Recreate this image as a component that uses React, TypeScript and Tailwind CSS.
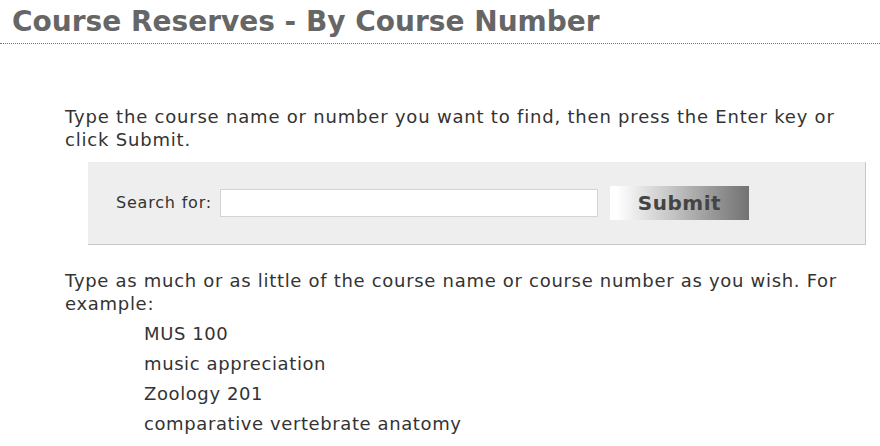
import React from 'react'

const examples = ['MUS 100', 'music appreciation', 'Zoology 201', 'comparative vertebrate anatomy']

const App: React.FC = () => {
  return (
    <div className="min-h-screen bg-white text-[#333] font-['DejaVu_Sans',Verdana,sans-serif]">
      <h1 className="border-b border-dotted border-[#777] pl-3 pt-[3px] pb-[2px] text-[28px] font-bold leading-[38px] text-[#666]">
        Course Reserves - By Course Number
      </h1>

      <div className="pl-[65px] pr-[20px] pt-[61px]">
        <p className="text-[18px] leading-[23px] tracking-[0.8px]">
          Type the course name or number you want to find, then press the Enter key or click Submit.
        </p>

        <form
          className="ml-[23px] mt-[11px] flex h-[83px] w-[778px] items-center border-r border-b border-[#c8c8c8] bg-[#eeeeee] pl-[28px]"
          onSubmit={(e) => e.preventDefault()}
        >
          <label htmlFor="q" className="text-[16px] tracking-[0.8px] text-[#333]">
            Search for:
          </label>
          <input
            id="q"
            type="text"
            className="ml-[8px] h-[28px] w-[378px] border border-[#d4d4d4] bg-white px-1 outline-none"
          />
          <button
            type="submit"
            className="ml-[12px] h-[34px] w-[139px] bg-gradient-to-r from-white from-[5%] via-[#c4c4c4] via-[45%] to-[#727272] text-[20px] font-bold tracking-[0.5px] text-[#444]"
          >
            Submit
          </button>
        </form>

        <p className="mt-[24px] text-[18px] leading-[23px] tracking-[0.7px]">
          Type as much or as little of the course name or course number as you wish. For example:
        </p>
        <ul className="mt-[4px] pl-[79px] text-[18px] tracking-[0.6px]">
          {examples.map((ex) => (
            <li key={ex} className="leading-[30px]">
              {ex}
            </li>
          ))}
        </ul>
      </div>
    </div>
  )
}

export default App
